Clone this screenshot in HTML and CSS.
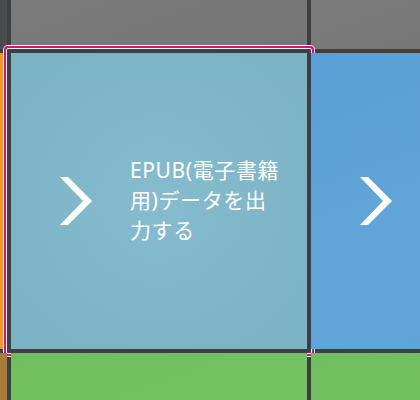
FILE: index.html
```html
<!DOCTYPE html>
<html lang="ja">
<head>
<meta charset="utf-8">
<link rel="stylesheet" href="styles.css">
</head>
<body>
<div class="grid">
  <div class="tile t-dark"></div>
  <div class="tile t-gray"></div>
  <div class="tile t-gray"></div>

  <div class="tile t-orange"></div>
  <div class="tile t-teal selected">
    <svg class="chev" viewBox="0 0 32 48" width="32" height="48"><polygon points="0,0 8,0 32,24 8,48 0,48 23,24" fill="#fff"/></svg>
    <div class="label">EPUB(電子書籍<br>用)データを出<br>力する</div>
  </div>
  <div class="tile t-blue">
    <svg class="chev" viewBox="0 0 32 48" width="32" height="48"><polygon points="0,0 8,0 32,24 8,48 0,48 23,24" fill="#fff"/></svg>
  </div>

  <div class="tile t-brown"></div>
  <div class="tile t-green"></div>
  <div class="tile t-green"></div>
</div>
</body>
</html>
```
FILE: styles.css
```css
html, body {
  margin: 0;
  padding: 0;
  background: #3e3f41;
  overflow: hidden;
  width: 420px;
  height: 400px;
}
.grid {
  display: grid;
  grid-template-columns: repeat(3, 296px);
  grid-auto-rows: 296px;
  gap: 4px;
  margin-left: -289px;
  margin-top: -247px;
}
.tile {
  position: relative;
  display: flex;
  align-items: center;
  padding-left: 49px;
  box-sizing: border-box;
}
.t-dark { background: #4a4b4d; }
.t-gray { background: linear-gradient(160deg, #757576 0%, #7c7c7d 50%, #767677 100%); }
.t-orange { background: #f39a1e; }
.t-teal { background: radial-gradient(circle at 50% 50%, #86bccd 0%, #7db5c7 70%, #7bb3c5 100%); }
.t-blue { background: linear-gradient(160deg, #5a9fd5 0%, #62a6d9 60%, #5fa3d6 100%); }
.t-brown { background: #a87a3c; }
.t-green { background: linear-gradient(160deg, #70be5e 0%, #77c465 50%, #72bf5f 100%); }
.chev {
  display: block;
  flex: none;
}
.label {
  margin-left: 38px;
  margin-top: -2px;
  color: #fff;
  font-family: "Noto Sans", "Noto Sans CJK JP", sans-serif;
  font-size: 21px;
  letter-spacing: 0.6px;
  line-height: 30px;
  white-space: nowrap;
}
.selected::after {
  content: "";
  position: absolute;
  top: -7px;
  left: -7px;
  right: -7px;
  bottom: -7px;
  border: 2px solid #e0107a;
  border-radius: 4px;
  box-shadow: 0 0 0 1px #ffffff, inset 0 0 0 1px #ffffff;
  pointer-events: none;
}
```
